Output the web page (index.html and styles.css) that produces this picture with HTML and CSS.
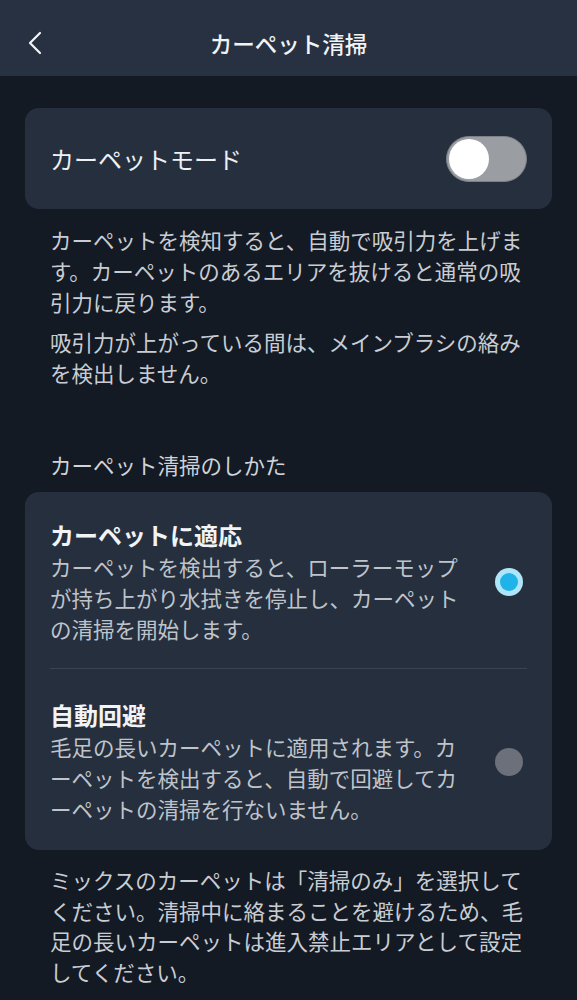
FILE: index.html
```html
<!DOCTYPE html>
<html lang="ja">
<head>
<meta charset="utf-8">
<title>カーペット清掃</title>
<link rel="stylesheet" href="styles.css">
</head>
<body>
<header class="topbar">
  <button class="back" aria-label="戻る">
    <svg width="16" height="24" viewBox="0 0 16 24"><polyline points="13,2 3,12 13,22" fill="none" stroke="#f2f4f6" stroke-width="2.2" stroke-linecap="round" stroke-linejoin="round"/></svg>
  </button>
  <h1 class="title">カーペット清掃</h1>
  <span class="spacer"></span>
</header>
<main class="content">
  <section class="card toggle-card">
    <span class="toggle-label">カーペットモード</span>
    <span class="switch"><span class="knob"></span></span>
  </section>
  <div class="note">
    <p>カーペットを検知すると、自動で吸引力を上げます。カーペットのあるエリアを抜けると通常の吸引力に戻ります。</p>
    <p>吸引力が上がっている間は、メインブラシの絡みを検出しません。</p>
  </div>
  <h2 class="section-label">カーペット清掃のしかた</h2>
  <section class="card options">
    <div class="option">
      <div class="option-text">
        <div class="option-title">カーペットに適応</div>
        <div class="option-desc">カーペットを検出すると、ローラーモップが持ち上がり水拭きを停止し、カーペットの清掃を開始します。</div>
      </div>
      <span class="radio radio-on"><span class="dot"></span></span>
    </div>
    <div class="divider"></div>
    <div class="option option-second">
      <div class="option-text">
        <div class="option-title">自動回避</div>
        <div class="option-desc">毛足の長いカーペットに適用されます。カーペットを検出すると、自動で回避してカーペットの清掃を行ないません。</div>
      </div>
      <span class="radio radio-off"></span>
    </div>
  </section>
  <p class="footnote">ミックスのカーペットは「清掃のみ」を選択してください。清掃中に絡まることを避けるため、毛足の長いカーペットは進入禁止エリアとして設定してください。</p>
</main>
</body>
</html>
```

FILE: styles.css
```css
* { box-sizing: border-box; }

html, body {
  margin: 0;
  padding: 0;
  background: #131a24;
}

body {
  font-family: "Noto Sans CJK JP", "Noto Sans", sans-serif;
  color: #c9cdd3;
  width: 577px;
  min-height: 1000px;
}

.topbar {
  height: 76px;
  padding-top: 10px;
  background: #273141;
  display: grid;
  grid-template-columns: 1fr auto 1fr;
  align-items: center;
}

.back {
  justify-self: start;
  margin-left: 27px;
  padding: 0;
  border: 0;
  background: transparent;
  display: flex;
  align-items: center;
}

.title {
  margin: 0;
  font-size: 22.5px;
  font-weight: 500;
  color: #f1f3f5;
  line-height: 32px;
}

.content {
  padding: 0 25px;
}

.card {
  background: #262f3e;
  border-radius: 14px;
}

.toggle-card {
  margin-top: 32px;
  height: 101px;
  padding: 0 25px;
  display: flex;
  align-items: center;
  justify-content: space-between;
}

.toggle-label {
  font-size: 24px;
  color: #eef0f3;
  line-height: 32px;
}

.switch {
  width: 81px;
  height: 46px;
  border-radius: 23px;
  background: #9a9da1;
  border: 1px solid #7d8186;
  padding: 2px;
  display: flex;
  align-items: center;
}

.knob {
  width: 40px;
  height: 40px;
  border-radius: 50%;
  background: #ffffff;
}

.note {
  margin-top: 15px;
  padding: 0 25px;
  font-size: 21.5px;
  line-height: 31px;
  color: #c9cdd3;
}

.note p {
  margin: 0;
}

.note p + p {
  margin-top: 9px;
}

.section-label {
  margin: 61px 0 0;
  padding: 0 25px;
  font-size: 21.5px;
  font-weight: 400;
  line-height: 32px;
  color: #d0d3d8;
}

.options {
  margin-top: 11px;
}

.option {
  display: flex;
  align-items: center;
  gap: 30px;
  padding: 27px 29px 24px 25px;
}

.option-second {
  padding-top: 30px;
  padding-bottom: 26px;
}

.option-text {
  flex: 1;
}

.option-title {
  font-size: 24px;
  font-weight: 700;
  line-height: 32px;
  color: #f1f3f5;
}

.option-desc {
  font-size: 21.5px;
  line-height: 31px;
  color: #bfc4cb;
}

.radio {
  flex: none;
  width: 28px;
  height: 28px;
  border-radius: 50%;
  display: flex;
  align-items: center;
  justify-content: center;
}

.radio-on {
  background: #aee5f8;
}

.radio-on .dot {
  width: 18px;
  height: 18px;
  border-radius: 50%;
  background: #1fb3ea;
}

.radio-off {
  background: #6b707a;
}

.divider {
  height: 1px;
  margin: 0 25px;
  background: #3a4352;
}

.footnote {
  margin: 15px 0 0;
  padding: 0 25px;
  font-size: 21.5px;
  line-height: 30.5px;
  color: #c9cdd3;
}
```
